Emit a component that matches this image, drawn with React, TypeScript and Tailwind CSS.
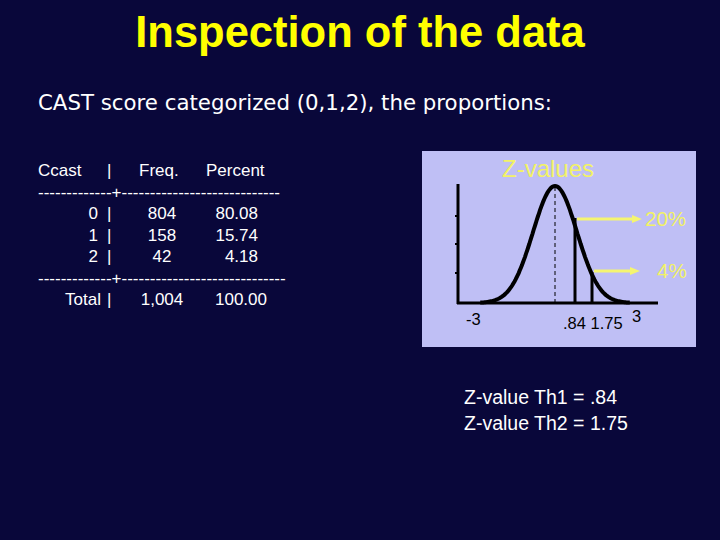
import React from "react";

interface FreqRow {
  label: string;
  freq: string;
  pct: string;
}

const rows: FreqRow[] = [
  { label: "0", freq: "804", pct: "80.08" },
  { label: "1", freq: "158", pct: "15.74" },
  { label: "2", freq: "42", pct: "4.18" },
];

// normal curve, 22px per sd, peak at x=133
const curvePath = (() => {
  const pts: string[] = [];
  for (let i = 0; i <= 140; i++) {
    const z = -3.4 + (6.8 * i) / 140;
    const x = 133 + 22 * z;
    const y = 152 - 117 * Math.exp((-z * z) / 2);
    pts.push(`${i === 0 ? "M" : "L"}${x.toFixed(1)} ${y.toFixed(1)}`);
  }
  return pts.join(" ");
})();

function ZChart() {
  return (
    <div className="w-[274px] h-[196px] bg-[#bfbff5]">
      <svg width="274" height="196" viewBox="0 0 274 196">
        <text x="126" y="26" textAnchor="middle" fontSize="24" fill="#f2f266" fontFamily="'Liberation Sans', Arial, sans-serif">
          Z-values
        </text>
        {/* axes */}
        <line x1="36" y1="33" x2="36" y2="153" stroke="#000" strokeWidth="3" />
        <line x1="35" y1="152" x2="236" y2="152" stroke="#000" strokeWidth="3" />
        <line x1="33" y1="65" x2="36" y2="65" stroke="#000" strokeWidth="2" />
        <line x1="33" y1="93" x2="36" y2="93" stroke="#000" strokeWidth="2" />
        <line x1="33" y1="122" x2="36" y2="122" stroke="#000" strokeWidth="2" />
        {/* curve */}
        <path d={curvePath} fill="none" stroke="#000" strokeWidth="4" />
        <line x1="133" y1="36" x2="133" y2="152" stroke="#000" strokeWidth="1" strokeDasharray="4 3" />
        <line x1="153" y1="67" x2="153" y2="152" stroke="#000" strokeWidth="3" />
        <line x1="170" y1="121" x2="170" y2="152" stroke="#000" strokeWidth="3" />
        {/* arrows */}
        <line x1="155" y1="68" x2="212" y2="68" stroke="#f5f570" strokeWidth="3" />
        <polygon points="210,64 220,68 210,72" fill="#f5f570" />
        <line x1="172" y1="120" x2="210" y2="120" stroke="#f5f570" strokeWidth="3" />
        <polygon points="208,116 218,120 208,124" fill="#f5f570" />
        <text x="223" y="75" fontSize="20.5" fill="#f2f266" fontFamily="'Liberation Sans', Arial, sans-serif">20%</text>
        <text x="235" y="127" fontSize="20.5" fill="#f2f266" fontFamily="'Liberation Sans', Arial, sans-serif">4%</text>
        {/* labels */}
        <text x="44" y="174" fontSize="16.5" fill="#000" fontFamily="'Liberation Sans', Arial, sans-serif">-3</text>
        <text x="141" y="178" fontSize="16.5" fill="#000" fontFamily="'Liberation Sans', Arial, sans-serif">.84 1.75</text>
        <text x="210" y="171" fontSize="16.5" fill="#000" fontFamily="'Liberation Sans', Arial, sans-serif">3</text>
      </svg>
    </div>
  );
}

export default function App() {
  return (
    <div className="w-[720px] h-[540px] bg-[#09073a] text-white overflow-hidden font-['Liberation_Sans',Arial,sans-serif]">
      <h1 className="pt-[8px] text-center text-[43.5px] leading-[48px] font-bold text-[#ffff00]">
        Inspection of the data
      </h1>

      <p className="mt-[34px] ml-[38px] text-[21.3px] leading-[26px] font-['DejaVu_Sans',Verdana,sans-serif]">
        CAST score categorized (0,1,2), the proportions:
      </p>

      <div className="flex mt-[35px]">
        {/* frequency table */}
        <div className="ml-[38px] mt-[9px] w-[270px] text-[17px] leading-[21.5px]">
          <div className="flex">
            <span className="w-[69px]">Ccast</span>
            <span className="w-[32px]">|</span>
            <span className="w-[67px]">Freq.</span>
            <span>Percent</span>
          </div>
          <div className="whitespace-pre">-------------+----------------------------</div>
          {rows.map((r) => (
            <div key={r.label} className="flex">
              <span className="w-[60px] text-right">{r.label}</span>
              <span className="ml-[9px] w-[4px]">|</span>
              <span className="w-[102px] text-center">{r.freq}</span>
              <span className="w-[45px] text-right">{r.pct}</span>
            </div>
          ))}
          <div className="whitespace-pre">-------------+-----------------------------</div>
          <div className="flex">
            <span className="w-[63px] text-right">Total</span>
            <span className="ml-[6px] w-[4px]">|</span>
            <span className="w-[102px] text-center">1,004</span>
            <span className="w-[54px] text-right">100.00</span>
          </div>
        </div>

        {/* chart and thresholds */}
        <div className="ml-[114px] flex flex-col">
          <ZChart />
          <div className="mt-[37px] ml-[42px] text-[19.5px] leading-[26px]">
            <div>Z-value Th1 = .84</div>
            <div>Z-value Th2 = 1.75</div>
          </div>
        </div>
      </div>
    </div>
  );
}
